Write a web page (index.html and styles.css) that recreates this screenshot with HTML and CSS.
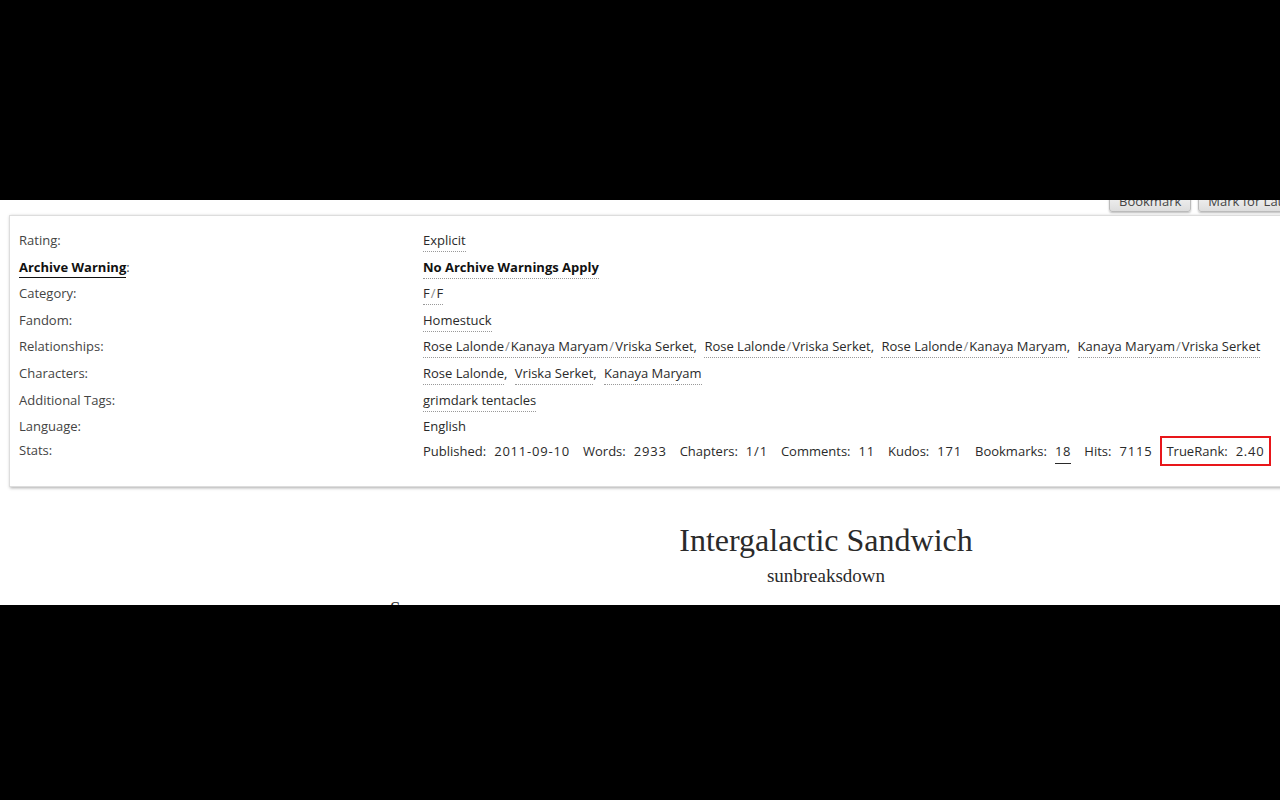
FILE: index.html
```html
<!DOCTYPE html>
<html>
<head>
<meta charset="utf-8">
<link rel="stylesheet" href="styles.css">
</head>
<body>
<div class="band top"></div>
<div class="frame">
  <div class="page">
    <div class="actions">
      <button class="btn">Bookmark</button>
      <button class="btn">Mark for Later</button>
    </div>
    <dl class="meta">
      <dt>Rating:</dt>
      <dd><a class="tag">Explicit</a></dd>
      <dt><span class="abbr">Archive Warning</span>:</dt>
      <dd><a class="tag strong">No Archive Warnings Apply</a></dd>
      <dt>Category:</dt>
      <dd><a class="tag">F<span class="sl">/</span>F</a></dd>
      <dt>Fandom:</dt>
      <dd><a class="tag">Homestuck</a></dd>
      <dt>Relationships:</dt>
      <dd class="list">
        <a class="tag">Rose Lalonde<span class="sl">/</span>Kanaya Maryam<span class="sl">/</span>Vriska Serket</a><span class="cm">,</span>
        <a class="tag">Rose Lalonde<span class="sl">/</span>Vriska Serket</a><span class="cm">,</span>
        <a class="tag">Rose Lalonde<span class="sl">/</span>Kanaya Maryam</a><span class="cm">,</span>
        <a class="tag">Kanaya Maryam<span class="sl">/</span>Vriska Serket</a>
      </dd>
      <dt>Characters:</dt>
      <dd class="list">
        <a class="tag">Rose Lalonde</a><span class="cm">,</span>
        <a class="tag">Vriska Serket</a><span class="cm">,</span>
        <a class="tag">Kanaya Maryam</a>
      </dd>
      <dt>Additional Tags:</dt>
      <dd><a class="tag">grimdark tentacles</a></dd>
      <dt>Language:</dt>
      <dd>English</dd>
      <dt class="last">Stats:</dt>
      <dd class="stats last">
        <span class="st"><span class="k">Published:</span><span class="v">2011-09-10</span></span>
        <span class="st"><span class="k">Words:</span><span class="v">2933</span></span>
        <span class="st"><span class="k">Chapters:</span><span class="v">1/1</span></span>
        <span class="st"><span class="k">Comments:</span><span class="v">11</span></span>
        <span class="st"><span class="k">Kudos:</span><span class="v">171</span></span>
        <span class="st"><span class="k">Bookmarks:</span><a class="v u">18</a></span>
        <span class="st"><span class="k">Hits:</span><span class="v">7115</span></span>
        <span class="st rank"><span class="k">TrueRank:</span><span class="v">2.40</span></span>
      </dd>
    </dl>
    <div class="work">
      <h2 class="title">Intergalactic Sandwich</h2>
      <h3 class="byline">sunbreaksdown</h3>
      <h3 class="summary">Summary:</h3>
    </div>
  </div>
</div>
<div class="band bottom"></div>
</body>
</html>
```
FILE: styles.css
```css
html, body {
  margin: 0;
  padding: 0;
  background: #000;
  width: 1280px;
  height: 800px;
  overflow: hidden;
}
.band.top { height: 200px; background: #000; }
.band.bottom { height: 195px; background: #000; }
.frame {
  height: 405px;
  background: #fff;
  overflow: hidden;
}
.page {
  width: 1320px;
  font-family: "Open Sans", "DejaVu Sans", sans-serif;
  font-size: 13px;
  color: #2a2a2a;
}
.actions {
  display: flex;
  gap: 7px;
  margin-top: -11px;
  padding-left: 1109px;
  height: 23px;
}
.btn {
  font-family: "Open Sans", "DejaVu Sans", sans-serif;
  font-size: 13px;
  color: #444;
  height: 23px;
  padding: 0 9px;
  border: 1px solid #bbb;
  border-radius: 3px;
  background: linear-gradient(#fafafa, #ddd);
  box-shadow: 0 1px 2px #bbb;
}
.meta {
  margin: 3px 0 0 9px;
  width: 1300px;
  border: 1px solid #ddd;
  box-shadow: 1px 1px 3px #aaa;
  padding: 14px 0 23px 9px;
  display: grid;
  grid-template-columns: 404px 1fr;
  grid-auto-rows: 20px;
  row-gap: 6.6px;
  line-height: 20px;
  box-sizing: border-box;
}
dt { margin: 0; color: #444; }
dd { margin: 0; }
.last { margin-top: -3px; }
.abbr {
  font-weight: bold;
  color: #111;
  border-bottom: 1px solid #111;
  padding-bottom: 1px;
}
.tag {
  color: #2a2a2a;
  border-bottom: 1px dotted #999;
  padding-bottom: 2px;
  text-decoration: none;
}
.tag.strong { font-weight: bold; color: #111; }
.sl { color: #888; padding: 0 1px; }
.cm { margin-right: 4px; }
.list { white-space: nowrap; }
.stats { display: flex; gap: 13px; align-items: center; white-space: nowrap; }
.st .k { margin-right: 8px; }
.st .v { letter-spacing: 0.8px; }
.u { border-bottom: 1px solid #2a2a2a; padding-bottom: 3px; }
.rank {
  border: 2px solid #e8161a;
  padding: 3px 4px;
  margin-left: -5px;
}
.work {
  width: 908px;
  margin-left: 372px;
  text-align: center;
  font-family: "Liberation Serif", "DejaVu Serif", serif;
  color: #2a2a2a;
}
.title {
  font-size: 32px;
  font-weight: normal;
  margin: 33px 0 0;
  line-height: 40px;
}
.byline {
  font-size: 19px;
  font-weight: normal;
  margin: 4px 0 0;
  line-height: 24px;
}
.summary {
  text-align: left;
  font-size: 19px;
  font-weight: normal;
  margin: 9px 0 0 18px;
  line-height: 24px;
}
```
